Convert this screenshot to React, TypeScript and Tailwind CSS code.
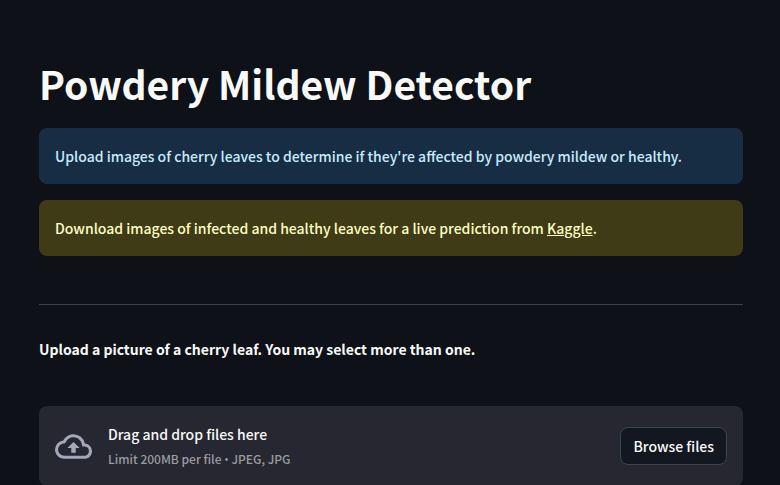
function CloudUploadIcon() {
  return (
    <svg viewBox="0 0 24 24" className="size-[37px] shrink-0 fill-[#a3a8b8]" aria-hidden="true">
      <path d="M19.35 10.04A7.49 7.49 0 0 0 12 4C9.11 4 6.6 5.64 5.35 8.04A5.994 5.994 0 0 0 0 14c0 3.31 2.69 6 6 6h13c2.76 0 5-2.24 5-5 0-2.64-2.05-4.78-4.65-4.96zM19 18H6c-2.21 0-4-1.79-4-4 0-2.05 1.53-3.76 3.56-3.97l1.07-.11.5-.95A5.469 5.469 0 0 1 12 6c2.62 0 4.88 1.86 5.39 4.43l.3 1.5 1.53.11A2.98 2.98 0 0 1 22 15c0 1.65-1.35 3-3 3zM8 13h2.55v3h2.9v-3H16l-4-4z" />
    </svg>
  );
}

export default function App() {
  return (
    <main className="min-h-screen bg-[#0e1117] pr-[37px] pl-[39px] font-['Noto_Sans_CJK_SC',sans-serif] text-sm leading-6 font-medium text-[#fafafa]">
      <h1 className="pt-[55px] pb-[17px] text-[39px] leading-14 font-bold">Powdery Mildew Detector</h1>

      <div className="flex flex-col gap-4">
        <div role="status" className="rounded-lg bg-[#172d43] p-4 text-[#c7ebff]">
          <p>Upload images of cherry leaves to determine if they're affected by powdery mildew or healthy.</p>
        </div>
        <div role="status" className="rounded-lg bg-[#3e3b16] p-4 text-[#ffffc2]">
          <p>
            Download images of infected and healthy leaves for a live prediction from{" "}
            <a href="#kaggle" className="underline">Kaggle</a>.
          </p>
        </div>
      </div>

      <hr className="mt-12 mb-8 border-[#3d4045]" />

      <label htmlFor="browse" className="block font-bold">
        Upload a picture of a cherry leaf. You may select more than one.
      </label>

      <section className="mt-[45px] flex items-center rounded-lg bg-[#262730] p-4">
        <CloudUploadIcon />
        <div className="ml-4 grow">
          <p>Drag and drop files here</p>
          <p className="mt-[3px] text-xs leading-5 text-[#9b9ba0]">
            Limit 200MB per file <span className="font-['Open_Sans',sans-serif]">•</span> JPEG, JPG
          </p>
        </div>
        <button id="browse" type="button" className="rounded-lg border border-[#41444c] bg-[#131720] px-3 py-1.5">
          Browse files
        </button>
      </section>
    </main>
  );
}
